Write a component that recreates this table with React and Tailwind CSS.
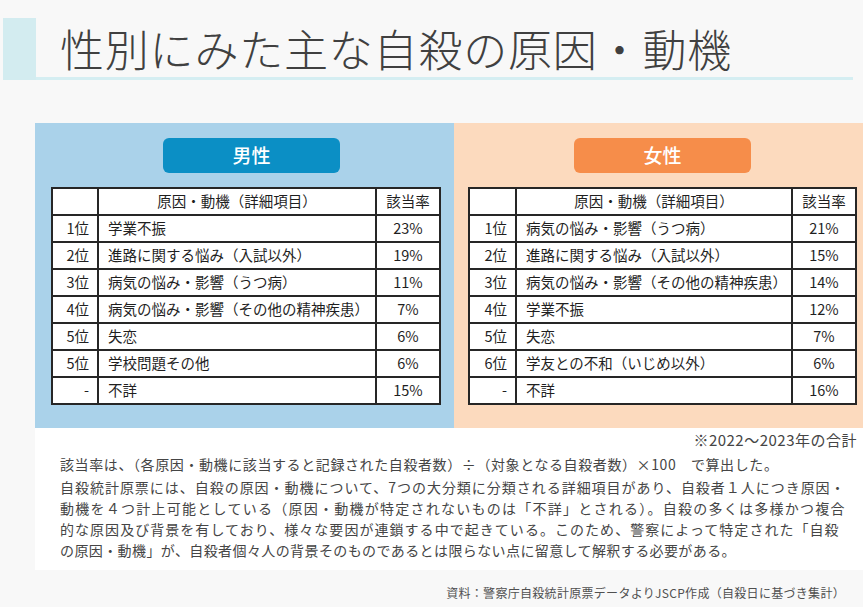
import React from "react";

const FONT = { fontFamily: '"Noto Sans CJK JP", "Noto Sans", sans-serif' };

const male = [
  ["1位", "学業不振", "23%"],
  ["2位", "進路に関する悩み（入試以外）", "19%"],
  ["3位", "病気の悩み・影響（うつ病）", "11%"],
  ["4位", "病気の悩み・影響（その他の精神疾患）", "7%"],
  ["5位", "失恋", "6%"],
  ["5位", "学校問題その他", "6%"],
  ["-", "不詳", "15%"],
];

const female = [
  ["1位", "病気の悩み・影響（うつ病）", "21%"],
  ["2位", "進路に関する悩み（入試以外）", "15%"],
  ["3位", "病気の悩み・影響（その他の精神疾患）", "14%"],
  ["4位", "学業不振", "12%"],
  ["5位", "失恋", "7%"],
  ["6位", "学友との不和（いじめ以外）", "6%"],
  ["-", "不詳", "16%"],
];

function Table({ rows, cols }) {
  const cell = "h-[27px] border-r-2 border-b-2 border-[#262626] flex items-center text-[14.5px] text-[#1f1f1f] leading-none";
  return (
    <div className={`grid ${cols} border-t-2 border-l-2 border-[#262626] bg-white`}>
      <div className={cell}></div>
      <div className={`${cell} justify-center`}>原因・動機（詳細項目）</div>
      <div className={`${cell} justify-center`}>該当率</div>
      {rows.map((r, i) => (
        <React.Fragment key={i}>
          <div className={`${cell} justify-end pr-[8px]`}>{r[0]}</div>
          <div className={`${cell} pl-[9px]`}>{r[1]}</div>
          <div className={`${cell} justify-center`}>{r[2]}</div>
        </React.Fragment>
      ))}
    </div>
  );
}

export default function App() {
  return (
    <div className="w-[863px] h-[607px] bg-[#f8f8f8] overflow-hidden" style={FONT}>
      {/* Header */}
      <div className="flex pt-[18px]">
        <div className="ml-[3px] w-[33px] h-[62px] bg-[#d3ecf0]"></div>
        <div className="flex-1 mr-[10px] h-[62px] border-b-[3px] border-[#d5eef2] flex items-center pl-[24px]">
          <h1 className="text-[44px] font-light tracking-[0.8px] text-[#404040] leading-none">
            性別にみた主な自殺の原因・動機
          </h1>
        </div>
      </div>

      {/* Main box */}
      <div className="ml-[35px] mt-[43px]">
        <div className="flex h-[305px]">
          <div className="w-[419px] bg-[#aad2ea] pt-[15px] pl-[16px]">
            <div className="ml-[112px] w-[177px] h-[35px] rounded-[6px] bg-[#0b8fc5] flex items-center justify-center text-white text-[19px] font-medium">
              男性
            </div>
            <div className="mt-[14px] w-[390px]">
              <Table rows={male} cols="grid-cols-[46px_278px_64px]" />
            </div>
          </div>
          <div className="flex-1 bg-[#fcdabe] pt-[15px] pl-[14px]">
            <div className="ml-[106px] w-[177px] h-[35px] rounded-[6px] bg-[#f68d4a] flex items-center justify-center text-white text-[19px] font-medium">
              女性
            </div>
            <div className="mt-[14px] w-[389px]">
              <Table rows={female} cols="grid-cols-[47px_276px_64px]" />
            </div>
          </div>
        </div>

        {/* Notes */}
        <div className="bg-white h-[142px] pl-[25px] pr-[18px] text-[#454545]">
          <div className="text-right text-[15px] tracking-[0.5px] leading-[20px] pt-[2px] mr-[-12px]">※2022～2023年の合計</div>
          <p className="mt-[4px] text-[14px] leading-[21px] tracking-[0.6px]">
            該当率は、（各原因・動機に該当すると記録された自殺者数）÷（対象となる自殺者数）×100　で算出した。
          </p>
          <div className="mt-[2px] text-[14px] leading-[21px] tracking-[0.4px]">
            <div className="[text-align-last:justify] text-justify">自殺統計原票には、自殺の原因・動機について、7つの大分類に分類される詳細項目があり、自殺者１人につき原因・</div>
            <div className="[text-align-last:justify] text-justify">動機を４つ計上可能としている（原因・動機が特定されないものは「不詳」とされる）。自殺の多くは多様かつ複合</div>
            <div className="[text-align-last:justify] text-justify pr-[6px]">的な原因及び背景を有しており、様々な要因が連鎖する中で起きている。このため、警察によって特定された「自殺</div>
            <div>の原因・動機」が、自殺者個々人の背景そのものであるとは限らない点に留意して解釈する必要がある。</div>
          </div>
        </div>
      </div>

      {/* Footer */}
      <div className="mt-[15px] pr-[18px] text-right text-[12px] leading-[16px] tracking-[0.3px] text-[#505050]">
        資料：警察庁自殺統計原票データよりJSCP作成（自殺日に基づき集計）
      </div>
    </div>
  );
}
